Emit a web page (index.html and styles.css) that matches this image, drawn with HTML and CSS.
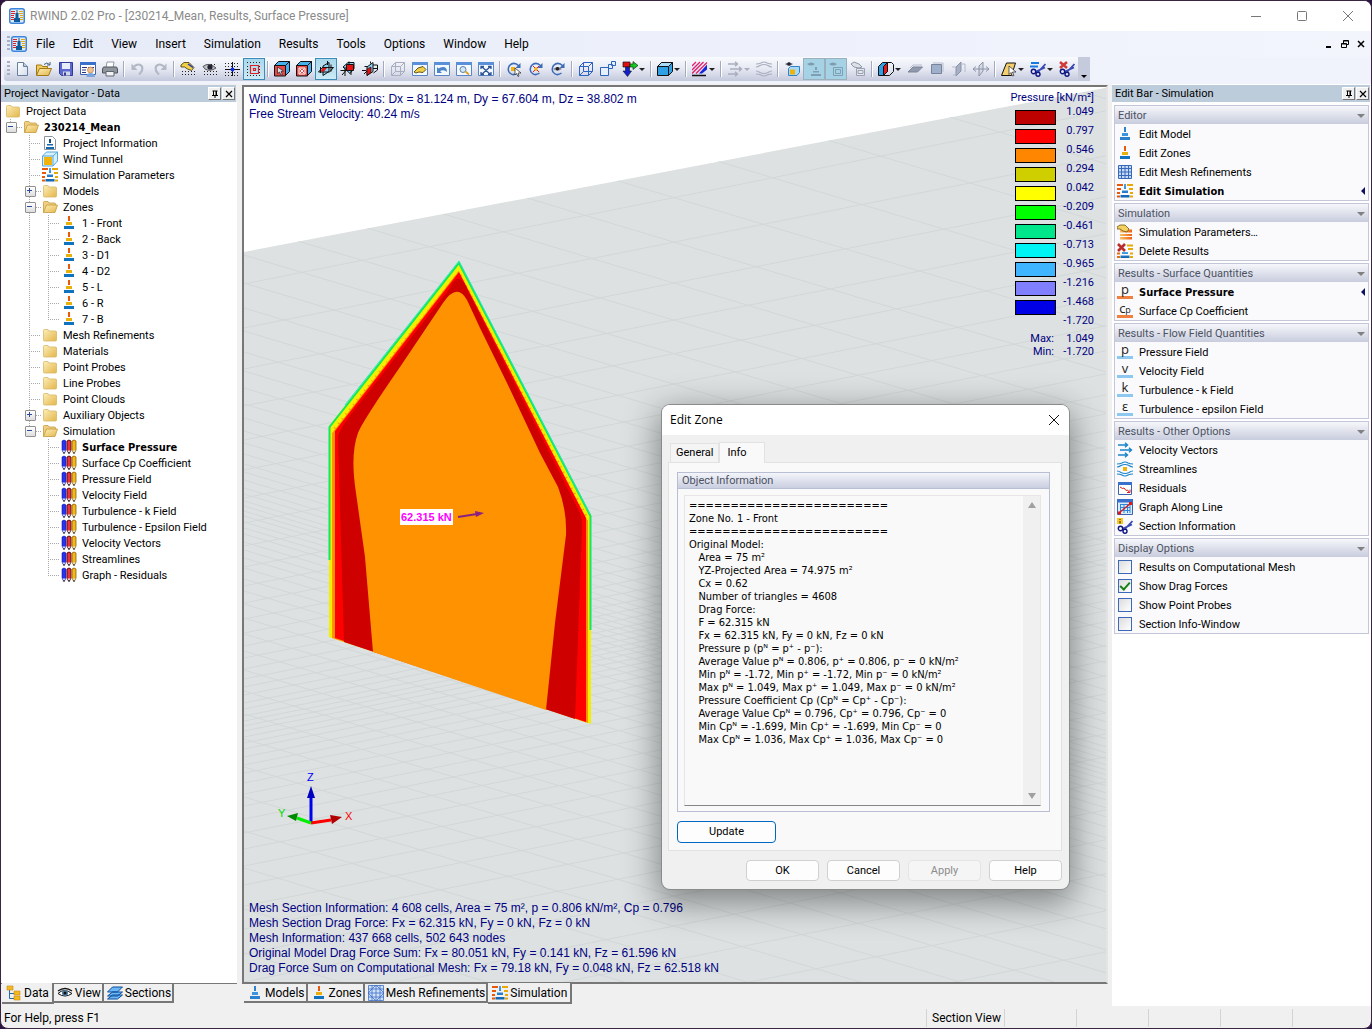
FILE: index.html
```html
<!DOCTYPE html>
<html lang="en">
<head>
<meta charset="utf-8">
<title>RWIND 2.02 Pro</title>
<link rel="stylesheet" href="styles.css">
</head>
<body>
<svg class="sprite" aria-hidden="true">
  <defs>
    <linearGradient id="gFolder" x1="0" y1="0" x2="1" y2="1"><stop offset="0" stop-color="#fdeeb8"/><stop offset="1" stop-color="#e3b64a"/></linearGradient>
    <linearGradient id="gBlue" x1="0" y1="0" x2="0" y2="1"><stop offset="0" stop-color="#4fa8e8"/><stop offset="1" stop-color="#0c62b0"/></linearGradient>
    <linearGradient id="gPage" x1="0" y1="0" x2="1" y2="1"><stop offset="0" stop-color="#fff"/><stop offset="1" stop-color="#d5deec"/></linearGradient>
    <linearGradient id="gOr" x1="0" y1="0" x2="1" y2="0"><stop offset="0" stop-color="#f9c060"/><stop offset="1" stop-color="#ef5f14"/></linearGradient>
  </defs>
  <symbol id="app" viewBox="0 0 16 16"><rect x=".75" y=".75" width="14.500" height="14.500" rx="2" fill="#dcebfb" stroke="#3c84dc" stroke-width="1.500"/><path d="M2 3.500h4M2 5.500h4M2 7.500h3M2 9.500h3M2 11.500h3" stroke="#e02020"/><path d="M10 3.500h4M10 5.500h4M11 7.500h3M11 9.500h3M11 11.500h3" stroke="#e8a800"/><path d="M7.500 2h1v3h1v5h1.500v4h-6v-4h1.500v-5h1z" fill="#0c5c9c"/></symbol>
  <symbol id="folder" viewBox="0 0 16 16"><path d="M1.500 3.500q0-1 1-1h3.500l1 1.500h6.500q1 0 1 1v8q0 1-1 1h-11q-1 0-1-1z" fill="url(#gFolder)" stroke="#d8b766" stroke-width=".8"/></symbol>
  <symbol id="folderopen" viewBox="0 0 16 16"><path d="M1.500 13.500v-10q0-1 1-1h3.500l1 1.500h5.500q1 0 1 1v2" fill="#f0d080" stroke="#c49a40" stroke-width=".8"/><path d="M1.500 13.500l3-7.500h11l-2.500 7.500z" fill="url(#gFolder)" stroke="#c49a40" stroke-width=".8"/></symbol>
  <symbol id="zone" viewBox="0 0 16 16"><path d="M7 1h2v5h-2z" fill="#e8590c"/><path d="M5 7h6v3h-6z" fill="#e8b008"/><path d="M3 11h10v3h-10z" fill="#1173bf"/></symbol>
  <symbol id="model" viewBox="0 0 16 16"><path d="M7 1h2v5h-2z" fill="#2c82cf"/><path d="M5 7h6v3h-6z" fill="#3d93de"/><path d="M3 11h10v3h-10z" fill="#2c82cf"/></symbol>
  <symbol id="sim" viewBox="0 0 16 16"><path d="M0 2h6M0 6h4M0 10h3M0 13.500h3" stroke="#e8590c" stroke-width="2"/><path d="M10 2h6M12 6h4M13 10h3M13 13.500h3" stroke="#e8a808" stroke-width="2"/><path d="M7 1h2v5h-2zM5 7.500h6v2.500h-6zM3.500 12h9v2.500h-9z" fill="url(#gBlue)"/></symbol>
  <symbol id="info" viewBox="0 0 16 16"><path d="M2.500 1.500h8l3 3v10h-11z" fill="#fff" stroke="#8a949c"/><path d="M7 4h2v4h-2z" fill="#174f78"/><path d="M5 9h6v1.500h-6zM4 12h8v2h-8z" fill="#1468b0"/></symbol>
  <symbol id="tunnel" viewBox="0 0 16 16"><path d="M.5 5l4-4h11v9l-4.500 5h-10.500z" fill="#d9effb" stroke="#55a8d8"/><path d="M1 5h10v10M11 5l4.500-4" fill="none" stroke="#55a8d8"/><path d="M2 6h8v8h-8z" fill="#f2b20c"/></symbol>
  <symbol id="pens" viewBox="0 0 16 16"><path d="M1 2q2-2 4 0v9l-1.500 3h-1l-1.500-3z" fill="#2a32f0" stroke="#1a1c90" stroke-width=".6"/><path d="M6 2q2-2 4 0v9l-1.500 3h-1l-1.500-3z" fill="#f03040" stroke="#300" stroke-width=".8"/><path d="M11 2q2-2 4 0v9l-1.500 3h-1l-1.500-3z" fill="#f0b820" stroke="#8c6000" stroke-width=".8"/><path d="M1.500 11.500l1 2h1l1-2zM6.500 11.500l1 2h1l1-2zM11.500 11.500l1 2h1l1-2z" fill="#ddd"/><path d="M3 13v2M8 13v2M13 13v2" stroke="#222"/></symbol>
  <symbol id="grid" viewBox="0 0 16 16"><path d="M1.500 1.500h13v13h-13z" fill="#c4dcfa" stroke="#3a68b8"/><path d="M4.500 1v14M8 1v14M11.500 1v14M1 4.500h14M1 8h14M1 11.500h14" stroke="#3a68b8"/></symbol>
  <symbol id="mesh" viewBox="0 0 16 16"><path d="M.5.5h15v15h-15zM8 0v16M0 8h16M0 4h16M0 12h16M0 8l8-8 8 8-8 8zM4 0v16M12 0v16" fill="#cfe0fa" stroke="#3f70c4" stroke-width=".8"/></symbol>
  <symbol id="simpar" viewBox="0 0 16 16"><path d="M3 5.500h12v3h-12zM3 10h12v2h-12zM3 13h12v2.500h-12z" fill="url(#gOr)"/><path d="M0 3l3-2h5l4 4-2 3-4-1-3-2H0z" fill="#f4d060" stroke="#705010" stroke-width=".8"/></symbol>
  <symbol id="delres" viewBox="0 0 16 16"><path d="M10 2.500h6M11 6h5M13 10.500h3M13 14h3" stroke="#e8a808" stroke-width="2"/><path d="M0 10.500h3M0 14h3" stroke="#e8700c" stroke-width="2"/><path d="M5 9h6v2h-6zM3.500 12.500h9v2.500h-9z" fill="url(#gBlue)"/><path d="M1 1l7 7M8 1l-7 7" stroke="#b82c2c" stroke-width="2.600"/></symbol>
  <symbol id="vectors" viewBox="0 0 16 16"><path d="M1 3h9M3 8h11M1 13h9M8 .8l2.500 2.200L8 5.200M12 5.800l2.500 2.200L12 10.200M8 10.800l2.500 2.200L8 15.200" fill="none" stroke="currentColor" stroke-width="1.400"/></symbol>
  <symbol id="streams" viewBox="0 0 16 16"><path d="M0 3q3 0 5-1 3-2 6 0 2 1 5 1M0 6q2 0 4-1.500 4-2 8 0 2 1.500 4 1.500M0 10q2 0 4 1.500 4 2 8 0 2-1.500 4-1.500M0 13q3 0 5 1 3 2 6 0 2-1 5-1" fill="none" stroke="currentColor" stroke-width="1.200"/></symbol>
  <symbol id="resid" viewBox="0 0 16 16"><path d="M1.500 2.500h13v12h-13z" fill="#fff" stroke="#3a62b0"/><path d="M1 2h14v3h-14z" fill="#3a70cc"/><path d="M3 7l2.500 1.500 1.500-.5 2 2.500 1.500-.5 2 2.500M13 9.500v3h-3" fill="none" stroke="#e01818"/></symbol>
  <symbol id="graph" viewBox="0 0 16 16"><path d="M.5 1.500h15v14h-15z" fill="#d8ecfc" stroke="#3a62b0"/><path d="M0 0h16v3.500h-16z" fill="#3a70cc"/><path d="M3.500 5v9M7 5v9M10.500 5v9M13 5v9M3 5.500h10M3 8.500h10M3 11.500h10" stroke="#2f86d8"/><path d="M2 14l12-10" stroke="#e01818" stroke-width="1.300"/><path d="M1 12.500h3v3h-3zM12 3h3v3h-3z" fill="#e01818"/></symbol>
  <symbol id="cut" viewBox="0 0 16 16"><path d="M15.500 3l-7.500 8M15 6.500l-9 4" stroke="#3a4ab4" stroke-width="1.800"/><circle cx="3.500" cy="10.500" r="2.200" fill="none" stroke="#0c1480" stroke-width="1.400"/><circle cx="8" cy="13.300" r="2" fill="none" stroke="#0c1480" stroke-width="1.400"/></symbol>
  <symbol id="cutinfo" viewBox="0 0 16 16"><use href="#cut"/><path d="M0 0h6v6h-6z" fill="#f6c820"/><path d="M3 1v1M3 3v2.500" stroke="#222"/></symbol>
  <symbol id="cutdel" viewBox="0 0 16 16"><use href="#cut"/><path d="M1 1l7 6M8 1l-7 6" stroke="#d03a3a" stroke-width="2.600"/></symbol>
  <symbol id="cutadd" viewBox="0 0 16 16"><use href="#cut"/><path d="M1 1h8v2h-8zM0 4.500h8v2h-8z" fill="#1878e0"/></symbol>
  <symbol id="new" viewBox="0 0 16 16"><path d="M3.500 1.500h6l4 4v9h-10z" fill="url(#gPage)" stroke="#68809c"/><path d="M9.500 1.500v4h4" fill="#b8cce4" stroke="#68809c"/></symbol>
  <symbol id="open" viewBox="0 0 16 16"><path d="M.5 14v-10h5l1 1.500h5v2" fill="#f0cc60" stroke="#a07818"/><path d="M.5 14.500l3-7h12l-3 7z" fill="url(#gFolder)" stroke="#a07818"/><path d="M8 3.500q3-3 5.500 0M14 1v3h-3" fill="none" stroke="#3c6080"/></symbol>
  <symbol id="save" viewBox="0 0 16 16"><path d="M1.500 1.500h13v13h-11l-2-2z" fill="#5c68d0" stroke="#303a98"/><path d="M4 2h8v6h-8z" fill="#e8edfa"/><path d="M5 10.500h7v4h-7z" fill="#d2d6e6"/><path d="M6 11.500h2v3h-2z" fill="#303a98"/></symbol>
  <symbol id="data" viewBox="0 0 16 16"><path d="M.5 1.500h15v12h-15z" fill="#fff" stroke="#3a62b0"/><path d="M0 1h16v3h-16z" fill="#3a70cc"/><path d="M2 6.500h5M2 9h4M2 11.500h4M8 6.500h6" stroke="#303080"/><circle cx="10.500" cy="9" r="3" fill="#f2c08c" stroke="#b07038" stroke-width=".6"/><path d="M6.500 16q0-4 4-4t4.500 4z" fill="#7aa4dc"/></symbol>
  <symbol id="print" viewBox="0 0 16 16"><path d="M5 1h7l-1 6H4z" fill="#fff" stroke="#78808c" stroke-width=".8"/><path d="M1.500 6h13l1 2v4h-15v-4z" fill="#90969e" stroke="#50565e"/><path d="M4 10.500h8v4.500h-8z" fill="#f0f2f6" stroke="#60666e"/></symbol>
  <symbol id="undo" viewBox="0 0 16 16"><path d="M4 5.500q5-4 8 0 1.500 4-3 8" fill="none" stroke="#b2b8c6" stroke-width="2.200"/><path d="M1.500 2.500v6.500h6z" fill="#b2b8c6"/></symbol>
  <symbol id="hand" viewBox="0 0 16 16"><path d="M2 10.500h13M2 13.500h13M9 7.500h6" stroke="#222" stroke-dasharray="1 2"/><path d="M1 4l3-2.500h5l5 5-2.500 3-4-1.500-3-2H1z" fill="#f0d048" stroke="#403000" stroke-width=".8"/><path d="M8 3l5 3.500" stroke="#2436b8" stroke-width="1.500"/></symbol>
  <symbol id="eyedots" viewBox="0 0 16 16"><path d="M2 10.500h13M2 13.500h13M9 3.500h6" stroke="#222" stroke-dasharray="1 2"/><path d="M1 5.500q6-5 13 1.500-6 4-11 1z" fill="#c0c4cc" stroke="#333" stroke-width=".8"/><circle cx="8" cy="6" r="2.600" fill="#223"/></symbol>
  <symbol id="cross" viewBox="0 0 16 16"><path d="M1 2.500h15M1 5.500h15M1 11.500h15M1 14.500h15" stroke="#222" stroke-dasharray="1 2"/><path d="M8.500 1v14M1 8.500h15" stroke="#111"/><circle cx="8.500" cy="8.500" r="2" fill="#1030e0"/></symbol>
  <symbol id="snap" viewBox="0 0 16 16"><path d="M1 1.500h15M1 14.500h15M1 5.500h3M13 5.500h3M1 8.500h3M13 8.500h3M1 11.500h3M13 11.500h3" stroke="#222" stroke-dasharray="1 2"/><path d="M4.500 4.500h8v8h-8zM7.500 7.500h2v2h-2z" fill="none" stroke="#e02020" stroke-width="1.200"/></symbol>
  <symbol id="redbox" viewBox="0 0 16 16"><path d="M.5 4.500l4-4h11v10l-4 4h-11z" fill="#48b0ec" stroke="#111"/><path d="M.5 4.500h11v10.500h-11zM11.500 4.500l4-4" fill="#e84848" stroke="#111"/></symbol>
  <symbol id="boxsel" viewBox="0 0 16 16"><use href="#redbox"/><path d="M3.500 6l6 4-2.500.5 1.500 3-1.500.5-1.500-3-2 1.500z" fill="#ddd" stroke="#222" stroke-width=".7"/></symbol>
  <symbol id="boxdel" viewBox="0 0 16 16"><use href="#redbox"/><path d="M3 7h6v6h-6zM4 8l4 4M8 8l-4 4" fill="none" stroke="#fff"/></symbol>
  <symbol id="secA" viewBox="0 0 16 16"><path d="M5 5l6-3.500v9l-6 4z" fill="#8cd4f4" stroke="#111"/><path d="M.5 11l4-4.500h11l-4 4.500z" fill="none" stroke="#111"/><path d="M2 10.500l3-3.500 4 0-3 3.500z" fill="#e01818"/><path d="M9.500 0v4M13 3.500v7M2.500 6v6" stroke="#111"/></symbol>
  <symbol id="secB" viewBox="0 0 16 16"><path d="M3 6l5-4.500h6v6l-4 5z" fill="#8cd4f4" stroke="#111"/><path d="M6.500 3.500h7v6h-7z" fill="#e81010" stroke="#111"/><path d="M.5 9.500h12M5 6v9M2 14l4-4.500M9 .5v3M11 9v5" stroke="#111" fill="none"/></symbol>
  <symbol id="secC" viewBox="0 0 16 16"><path d="M5 6l6-4.500v9l-6 4z" fill="#8cd4f4" stroke="#111"/><path d="M5 8l4-2v5.500l-4 3z" fill="#e81010" stroke="#111" stroke-width=".7"/><path d="M0 9.500h4M2.500 5.500h3M11 4h4.500v5l-4 3M11 7.500h4.500M8.500.5v2M2 13l3-3" stroke="#111" fill="none"/></symbol>
  <symbol id="wire" viewBox="0 0 16 16"><path d="M1.500 5.500h9v9h-9zM5.500 1.500h9v9h-9zM1.500 5.500l4-4M10.500 5.500l4-4M1.500 14.500l4-4M10.500 14.500l4-4" fill="none" stroke="currentColor"/></symbol>
  <symbol id="win" viewBox="0 0 16 16"><path d="M.5 1.500h15v13h-15z" fill="#f4f9ff" stroke="#5a86c8"/><path d="M0 1h16v3h-16z" fill="#5a90d8"/></symbol>
  <symbol id="winhand" viewBox="0 0 16 16"><use href="#win"/><path d="M2 11l4-4 5-1.500 3 3-3 3-4-.5-3 1z" fill="#f0d048" stroke="#403000" stroke-width=".8"/></symbol>
  <symbol id="winback" viewBox="0 0 16 16"><use href="#win"/><path d="M3 6v6h5l-2-2q4-2 7 1 0-5-4-5-3 0-4.500 1.500z" fill="#4c84c8"/></symbol>
  <symbol id="winzoom" viewBox="0 0 16 16"><use href="#win"/><circle cx="7" cy="8.500" r="3" fill="#cfe8fa" stroke="#68809c"/><path d="M9.500 10.500l3.500 3" stroke="#e0a020" stroke-width="1.800"/></symbol>
  <symbol id="winfit" viewBox="0 0 16 16"><use href="#win"/><path d="M3.500 5.500l9 8M12.500 5.500l-9 8M3 8V5.500h3M10 5.500h3V8M3 11v2.500h3M13 11v2.500h-3" fill="none" stroke="#2c5494" stroke-width="1.300"/></symbol>
  <symbol id="rot" viewBox="0 0 16 16"><path d="M13 5q-5-5-9.500-.5-3 5 1 8 3 2.500 7-.500" fill="none" stroke="#3c6cb8" stroke-width="1.500"/><path d="M14.500 2v5h-5z" fill="#3c6cb8"/></symbol>
  <symbol id="rotA" viewBox="0 0 16 16"><use href="#rot"/><path d="M5 6h4v4h-4z" fill="#f0b010"/><path d="M9 7l6 5h-3l1 3-1 .5-1.500-3-1.500 1.500z" fill="#fff" stroke="#222" stroke-width=".7"/></symbol>
  <symbol id="rotB" viewBox="0 0 16 16"><use href="#rot"/><path d="M5 5l6 6M11 5l-6 6" stroke="#e02020"/><circle cx="8" cy="8" r="1.700" fill="#f0b010"/></symbol>
  <symbol id="rotC" viewBox="0 0 16 16"><use href="#rot"/><path d="M3 8q5-4 9 0-5 3-9 0z" fill="#889" /><circle cx="7.500" cy="7.800" r="1.800" fill="#222"/></symbol>
  <symbol id="boxes" viewBox="0 0 16 16"><path d="M.5 6.500h8v8h-8zM8.500 3.500h4v4h-4zM11.500 .5h4v4h-4z" fill="#e6effc" stroke="#2c62c0"/></symbol>
  <symbol id="axes" viewBox="0 0 16 16"><path d="M1 1h7v5h-7z" fill="#e01010" stroke="#111" stroke-width=".7"/><path d="M3.500 6h4v4h2l-4 5.500-4.500-5.500h2.500z" fill="#1020d0" stroke="#111" stroke-width=".6"/><path d="M8 3h3V.500l5 4-5 4V6H8z" fill="#10c820" stroke="#111" stroke-width=".6"/></symbol>
  <symbol id="solid" viewBox="0 0 16 16"><path d="M.5 5.500l4-4h11v9l-4 4h-11z" fill="#30a0e4" stroke="#111"/><path d="M.5 5.500l4-4h11l-4 4z" fill="#a8dcf8" stroke="#111"/><path d="M11.500 5.500v9" stroke="#111"/></symbol>
  <symbol id="hatch" viewBox="0 0 16 16"><path d="M0 5l4-4M0 9l8-8M0 12.500L11.500 1M4 12.500L15 1.500" stroke="#e02070" stroke-width="1.300"/><path d="M7 12.500l8-9v5l-5 4z" fill="#1428d8"/><path d="M0 14.500h14" stroke="#111" stroke-width="1.500"/></symbol>
  <symbol id="eyebox" viewBox="0 0 16 16"><path d="M1 3q4-3 8 0-4 3-8 0z" fill="#667"/><circle cx="5" cy="3" r="1.700" fill="#223"/><path d="M4.500 7.500l2-2h9v6l-2.500 3h-8.500z" fill="#a8daf6" stroke="#2c84c8"/><path d="M6 8.500h5v5h-5z" fill="#f2b20c"/></symbol>
  <symbol id="eyemodel" viewBox="0 0 16 16"><path d="M1 3q4-3 8 0-4 3-8 0z" fill="#7f9cac"/><path d="M9 6h2v3h-2zM7 10h6v1.500h-6zM5 13h10v2h-10z" fill="#7fa0b4"/></symbol>
  <symbol id="eyemesh" viewBox="0 0 16 16"><path d="M1 3q4-3 8 0-4 3-8 0z" fill="#7f9cac"/><path d="M5.500 6.500h9v8h-9zM7.500 8.500h5v4h-5z" fill="none" stroke="#7fa0b4"/></symbol>
  <symbol id="handbox" viewBox="0 0 16 16"><path d="M1 3l3-2 5 2 3 3-3 1-5-1z" fill="#dde0e6" stroke="#8f98a8"/><path d="M6.500 7.500h8v7h-8zM8 9.500h5v3H8z" fill="#e4e7ee" stroke="#9aa2b2"/></symbol>
  <symbol id="clip" viewBox="0 0 16 16"><path d="M.5 5.500l4-4h5v9l-4 4h-5z" fill="#30a0e4" stroke="#111"/><path d="M5.500 5.500l4-4v9l-4 4z" fill="#e81818" stroke="#111"/><path d="M9.500 1.500h4l2 2v7l-4 4h-6" fill="none" stroke="#111"/></symbol>
  <symbol id="plane1" viewBox="0 0 16 16"><path d="M1 11l5-5h9.500l-5 5z" fill="#9199ac" stroke="#7a8398"/><path d="M3 7l3-3h9" fill="none" stroke="#b8bece"/></symbol>
  <symbol id="plane2" viewBox="0 0 16 16"><path d="M2.500 3.500h10v9h-10z" fill="#9fb0cc" stroke="#7a8398"/><path d="M4 2h10v9" fill="none" stroke="#b8bece"/></symbol>
  <symbol id="plane3" viewBox="0 0 16 16"><path d="M5 6l5-5v9l-5 5z" fill="#a6b0c4" stroke="#8a92a6"/><path d="M1 6h4M2 14h3M10 3h4v8" fill="none" stroke="#b4bac8"/></symbol>
  <symbol id="plane4" viewBox="0 0 16 16"><path d="M6 5l4-4v9l-4 5z" fill="#d4d9e6" stroke="#8a92a6"/><path d="M0 8h16M3 5.500l-3 2.500 3 2.500M13 5.500l3 2.500-3 2.500" fill="none" stroke="#8a92a6"/></symbol>
  <symbol id="pickplane" viewBox="0 0 16 16"><path d="M.5 14.500l5-12.500h9l-4 12.500z" fill="#f4cf70" stroke="#111"/><path d="M8 5l7 6h-3.500l1.500 3.500-1.500.5-1.500-3.500-2 2z" fill="#fff" stroke="#222" stroke-width=".7"/></symbol>
  <symbol id="tree" viewBox="0 0 16 16"><path d="M3.500 5v8.500h5M3.500 8.500h5" fill="none" stroke="#2068a8"/><path d="M1 1h6v4h-6zM8 6h6v4h-6zM8 11h6v4h-6z" fill="#f4b820" stroke="#c88c10" stroke-width=".6"/></symbol>
  <symbol id="eye" viewBox="0 0 16 16"><path d="M1 8.500q6-6 14 0-7 5-14 0z" fill="#fff" stroke="#111"/><path d="M1 6q7-5 14 0" fill="none" stroke="#111" stroke-width="1.300"/><circle cx="8" cy="8" r="3" fill="#4c7ca0"/><circle cx="8" cy="8" r="1.500" fill="#111"/></symbol>
  <symbol id="layers" viewBox="0 0 16 16"><path d="M.5 14l5-4h10l-5 4zM.5 11l5-4h10l-5 4zM.5 7l5-5h10l-5 5z" fill="#6cb8f4" stroke="#0c4c9c"/></symbol>
  <symbol id="pin" viewBox="0 0 8 8"><path d="M1.500 1h5M2.500 1v4M5.500 1v4M1 5.500h6M4 5.500V8" fill="none" stroke="#000"/><path d="M5 1v4" stroke="#000"/></symbol>
  <symbol id="x" viewBox="0 0 8 8"><path d="M1 1l6 6M7 1l-6 6" stroke="currentColor" stroke-width="1.200"/></symbol>
</svg>

<div class="window">
  <header class="titlebar">
    <svg class="ic"><use href="#app"/></svg>
    <h1>RWIND 2.02 Pro - [230214_Mean, Results, Surface Pressure]</h1>
    <div class="winbtns">
      <button aria-label="Minimize"><svg viewBox="0 0 10 10"><path d="M0 5.500h10"/></svg></button>
      <button aria-label="Maximize"><svg viewBox="0 0 10 10"><rect x=".5" y=".5" width="9" height="9" rx="1"/></svg></button>
      <button aria-label="Close"><svg viewBox="0 0 10 10"><path d="M0 0l10 10M10 0L0 10"/></svg></button>
    </div>
  </header>

  <nav class="menubar">
    <span class="grip"></span>
    <svg class="ic"><use href="#app"/></svg>
    <button>File</button><button>Edit</button><button>View</button><button>Insert</button><button>Simulation</button><button>Results</button><button>Tools</button><button>Options</button><button>Window</button><button>Help</button>
    <div class="mdi">
      <button aria-label="Minimize document"><svg viewBox="0 0 8 8"><path d="M1 7h5" stroke-width="2"/></svg></button>
      <button aria-label="Restore document"><svg viewBox="0 0 8 8"><path d="M2.500 3V.500h5v4H6M.500 3.500h5v4h-5zM.500 4h5M2.500 1h5"/></svg></button>
      <button aria-label="Close document"><svg viewBox="0 0 8 8"><path d="M1 1l6 6M7 1L1 7" stroke-width="1.500"/></svg></button>
    </div>
  </nav>

  <div class="toolrow">
    <div class="toolbar">
      <span class="grip"></span>
      <button aria-label="New"><svg class="ic"><use href="#new"/></svg></button>
      <button aria-label="Open"><svg class="ic"><use href="#open"/></svg></button>
      <button aria-label="Save"><svg class="ic"><use href="#save"/></svg></button>
      <button aria-label="Data"><svg class="ic"><use href="#data"/></svg></button>
      <button aria-label="Print"><svg class="ic"><use href="#print"/></svg></button>
      <i></i>
      <button aria-label="Undo"><svg class="ic"><use href="#undo"/></svg></button>
      <button aria-label="Redo" class="flip"><svg class="ic"><use href="#undo"/></svg></button>
      <i></i>
      <button aria-label="Edit grid"><svg class="ic"><use href="#hand"/></svg></button>
      <button aria-label="Show grid"><svg class="ic"><use href="#eyedots"/></svg></button>
      <button aria-label="Origin"><svg class="ic"><use href="#cross"/></svg></button>
      <button aria-label="Snap" class="on"><svg class="ic"><use href="#snap"/></svg></button>
      <i></i>
      <button aria-label="Run"><svg class="ic"><use href="#boxsel"/></svg></button>
      <button aria-label="Delete"><svg class="ic"><use href="#boxdel"/></svg></button>
      <button aria-label="Section X" class="on"><svg class="ic"><use href="#secA"/></svg></button>
      <button aria-label="Section Y"><svg class="ic"><use href="#secB"/></svg></button>
      <button aria-label="Section Z"><svg class="ic"><use href="#secC"/></svg></button>
      <i></i>
      <button aria-label="Wireframe" class="dim"><svg class="ic"><use href="#wire"/></svg></button>
      <button aria-label="Pan"><svg class="ic"><use href="#winhand"/></svg></button>
      <button aria-label="Previous view"><svg class="ic"><use href="#winback"/></svg></button>
      <button aria-label="Zoom window"><svg class="ic"><use href="#winzoom"/></svg></button>
      <button aria-label="Zoom all"><svg class="ic"><use href="#winfit"/></svg></button>
      <i></i>
      <button aria-label="Rotate"><svg class="ic"><use href="#rotA"/></svg></button>
      <button aria-label="Rotate about point"><svg class="ic"><use href="#rotB"/></svg></button>
      <button aria-label="Rotate camera"><svg class="ic"><use href="#rotC"/></svg></button>
      <i></i>
      <button aria-label="Isometric"><svg class="ic"><use href="#wire"/></svg></button>
      <button aria-label="Perspective"><svg class="ic"><use href="#boxes"/></svg></button>
      <button aria-label="View direction" class="drop"><svg class="ic"><use href="#axes"/></svg></button>
      <i></i>
      <button aria-label="Display mode" class="drop"><svg class="ic"><use href="#solid"/></svg></button>
      <i></i>
      <button aria-label="Hatching" class="drop"><svg class="ic"><use href="#hatch"/></svg></button>
      <i></i>
      <button aria-label="Vectors" class="drop dim"><svg class="ic"><use href="#vectors"/></svg></button>
      <button aria-label="Streamlines" class="dim"><svg class="ic"><use href="#streams"/></svg></button>
      <i></i>
      <button aria-label="Show tunnel"><svg class="ic"><use href="#eyebox"/></svg></button>
      <button aria-label="Show model" class="on soft"><svg class="ic"><use href="#eyemodel"/></svg></button>
      <button aria-label="Show mesh" class="on soft"><svg class="ic"><use href="#eyemesh"/></svg></button>
      <button aria-label="Edit mesh"><svg class="ic"><use href="#handbox"/></svg></button>
      <i></i>
      <button aria-label="Clipping" class="drop"><svg class="ic"><use href="#clip"/></svg></button>
      <button aria-label="Plane XY"><svg class="ic"><use href="#plane1"/></svg></button>
      <button aria-label="Plane XZ"><svg class="ic"><use href="#plane2"/></svg></button>
      <button aria-label="Plane YZ"><svg class="ic"><use href="#plane3"/></svg></button>
      <button aria-label="Shift plane"><svg class="ic"><use href="#plane4"/></svg></button>
      <i></i>
      <button aria-label="Pick plane" class="drop"><svg class="ic"><use href="#pickplane"/></svg></button>
      <button aria-label="New section" class="drop"><svg class="ic"><use href="#cutadd"/></svg></button>
      <button aria-label="Delete section"><svg class="ic"><use href="#cutdel"/></svg></button>
      <button aria-label="Toolbar options" class="more"></button>
    </div>
  </div>

  <main class="main">
    <section class="nav">
      <div class="panehead"><h2>Project Navigator - Data</h2><button aria-label="Pin"><svg><use href="#pin"/></svg></button><button aria-label="Close"><svg><use href="#x"/></svg></button></div>
      <div class="treebox">
        <div class="row"><svg class="ic"><use href="#folder"/></svg><span>Project Data</span></div>
        <ul class="tree">
          <li><div class="row"><b class="ex">−</b><svg class="ic"><use href="#folderopen"/></svg><strong>230214_Mean</strong></div>
            <ul>
              <li><div class="row"><b></b><svg class="ic"><use href="#info"/></svg><span>Project Information</span></div></li>
              <li><div class="row"><b></b><svg class="ic"><use href="#tunnel"/></svg><span>Wind Tunnel</span></div></li>
              <li><div class="row"><b></b><svg class="ic"><use href="#sim"/></svg><span>Simulation Parameters</span></div></li>
              <li><div class="row"><b class="ex">+</b><svg class="ic"><use href="#folder"/></svg><span>Models</span></div></li>
              <li><div class="row"><b class="ex">−</b><svg class="ic"><use href="#folderopen"/></svg><span>Zones</span></div>
                <ul>
                  <li><div class="row"><b></b><svg class="ic"><use href="#zone"/></svg><span>1 - Front</span></div></li>
                  <li><div class="row"><b></b><svg class="ic"><use href="#zone"/></svg><span>2 - Back</span></div></li>
                  <li><div class="row"><b></b><svg class="ic"><use href="#zone"/></svg><span>3 - D1</span></div></li>
                  <li><div class="row"><b></b><svg class="ic"><use href="#zone"/></svg><span>4 - D2</span></div></li>
                  <li><div class="row"><b></b><svg class="ic"><use href="#zone"/></svg><span>5 - L</span></div></li>
                  <li><div class="row"><b></b><svg class="ic"><use href="#zone"/></svg><span>6 - R</span></div></li>
                  <li><div class="row"><b></b><svg class="ic"><use href="#zone"/></svg><span>7 - B</span></div></li>
                </ul></li>
              <li><div class="row"><b></b><svg class="ic"><use href="#folder"/></svg><span>Mesh Refinements</span></div></li>
              <li><div class="row"><b></b><svg class="ic"><use href="#folder"/></svg><span>Materials</span></div></li>
              <li><div class="row"><b></b><svg class="ic"><use href="#folder"/></svg><span>Point Probes</span></div></li>
              <li><div class="row"><b></b><svg class="ic"><use href="#folder"/></svg><span>Line Probes</span></div></li>
              <li><div class="row"><b></b><svg class="ic"><use href="#folder"/></svg><span>Point Clouds</span></div></li>
              <li><div class="row"><b class="ex">+</b><svg class="ic"><use href="#folder"/></svg><span>Auxiliary Objects</span></div></li>
              <li><div class="row"><b class="ex">−</b><svg class="ic"><use href="#folderopen"/></svg><span>Simulation</span></div>
                <ul>
                  <li><div class="row"><b></b><svg class="ic"><use href="#pens"/></svg><strong>Surface Pressure</strong></div></li>
                  <li><div class="row"><b></b><svg class="ic"><use href="#pens"/></svg><span>Surface Cp Coefficient</span></div></li>
                  <li><div class="row"><b></b><svg class="ic"><use href="#pens"/></svg><span>Pressure Field</span></div></li>
                  <li><div class="row"><b></b><svg class="ic"><use href="#pens"/></svg><span>Velocity Field</span></div></li>
                  <li><div class="row"><b></b><svg class="ic"><use href="#pens"/></svg><span>Turbulence - k Field</span></div></li>
                  <li><div class="row"><b></b><svg class="ic"><use href="#pens"/></svg><span>Turbulence - Epsilon Field</span></div></li>
                  <li><div class="row"><b></b><svg class="ic"><use href="#pens"/></svg><span>Velocity Vectors</span></div></li>
                  <li><div class="row"><b></b><svg class="ic"><use href="#pens"/></svg><span>Streamlines</span></div></li>
                  <li><div class="row"><b></b><svg class="ic"><use href="#pens"/></svg><span>Graph - Residuals</span></div></li>
                </ul></li>
            </ul></li>
        </ul>
      </div>
      <div class="tabs">
        <button class="cur"><svg class="ic"><use href="#tree"/></svg>Data</button>
        <button><svg class="ic"><use href="#eye"/></svg>View</button>
        <button><svg class="ic"><use href="#layers"/></svg>Sections</button>
      </div>
    </section>

    <section class="center">
      <div class="view">
        <svg class="scene" id="scene">
          <g transform="translate(-244,-87)">
            <clipPath id="floorclip"><path d="M244 252L1110 87h3000v3000H244z"/></clipPath>
            <path d="M244 252L1110 87h3000v3000H244z" fill="#dde1e1"/>
            <g id="mesh-lines" clip-path="url(#floorclip)" stroke="#d2d7d7" fill="none"></g>
            <path d="M329 426L459 261L591 515V724L329 637z" fill="#f0f000"/>
            <path d="M332 638V430L459 270L588 517V723z" fill="#ff9400"/>
            <path d="M335 638V431L459 272L586 518V722z" fill="#f00"/>
            <path d="M344 642L338 437Q339 430 352 413L450 288Q459 268 468 291L580 513Q583 522 582 530L575 719z" fill="#ce0000"/>
            <path d="M373 652L365 557L356 493Q350 455 358 433Q362 422 400 367L443 303Q457 282 467 300L480 328L507 383L540 453L558 487Q567 510 566 535L555 623L546 710z" fill="#ff9200"/>
            <path d="M331 432L459 268L589 520" fill="none" stroke="#f4ee00" stroke-width="3" stroke-dasharray="5 1"/>
            <path d="M329.500 560V427L459 263L590.500 516V630" fill="none" stroke="#10e860" stroke-width="2"/>
            <path d="M345 405L459 261L590 514" fill="none" stroke="#20e8c8" stroke-width="1"/>
            <path d="M458 517L477 514" stroke="#8a2080" stroke-width="2"/><path d="M475 511L484 513L476 517z" fill="#8a2080"/>
            <path d="M311 823V797" stroke="#0000f0" stroke-width="3"/><path d="M311 786L315 798H307z" fill="#0000c0"/>
            <path d="M311 823L331 820" stroke="#f00" stroke-width="3"/><path d="M342 817L332 824L330 815z" fill="#b00000"/>
            <path d="M311 823L297 818" stroke="#00f000" stroke-width="3"/><path d="M287 816L298 813L296 821z" fill="#008800"/>
          </g>
        </svg>
        <span class="force">62.315 kN</span>
        <span class="ax z">Z</span><span class="ax y">Y</span><span class="ax x">X</span>
        <p class="note head">Wind Tunnel Dimensions: Dx = 81.124 m, Dy = 67.604 m, Dz = 38.802 m<br>Free Stream Velocity: 40.24 m/s</p>
        <p class="note foot">Mesh Section Information: 4 608 cells, Area = 75 m², p = 0.806 kN/m², Cp = 0.796<br>Mesh Section Drag Force: Fx = 62.315 kN, Fy = 0 kN, Fz = 0 kN<br>Mesh Information: 437 668 cells, 502 643 nodes<br>Original Model Drag Force Sum: Fx = 80.051 kN, Fy = 0.141 kN, Fz = 61.596 kN<br>Drag Force Sum on Computational Mesh: Fx = 79.18 kN, Fy = 0.048 kN, Fz = 62.518 kN</p>
        <div class="legend">
          <h3>Pressure [kN/m²]</h3>
          <div class="scale">
            <div class="swatches"><i class="c1"></i><i class="c2"></i><i class="c3"></i><i class="c4"></i><i class="c5"></i><i class="c6"></i><i class="c7"></i><i class="c8"></i><i class="c9"></i><i class="c10"></i><i class="c11"></i></div>
            <div class="vals"><span>1.049</span><span>0.797</span><span>0.546</span><span>0.294</span><span>0.042</span><span>-0.209</span><span>-0.461</span><span>-0.713</span><span>-0.965</span><span>-1.216</span><span>-1.468</span><span>-1.720</span></div>
          </div>
          <dl><dt>Max:</dt><dd>1.049</dd><dt>Min:</dt><dd>-1.720</dd></dl>
        </div>
      </div>
      <div class="tabs">
        <button><svg class="ic"><use href="#model"/></svg>Models</button>
        <button><svg class="ic"><use href="#zone"/></svg>Zones</button>
        <button><svg class="ic"><use href="#mesh"/></svg>Mesh Refinements</button>
        <button class="cur"><svg class="ic"><use href="#sim"/></svg>Simulation</button>
      </div>
    </section>

    <aside class="edit">
      <div class="panehead"><h2>Edit Bar - Simulation</h2><button aria-label="Pin"><svg><use href="#pin"/></svg></button><button aria-label="Close"><svg><use href="#x"/></svg></button></div>
      <div class="groups">
        <section class="group"><h3>Editor</h3>
          <button><svg class="ic"><use href="#model"/></svg>Edit Model</button>
          <button><svg class="ic"><use href="#zone"/></svg>Edit Zones</button>
          <button><svg class="ic"><use href="#grid"/></svg>Edit Mesh Refinements</button>
          <button class="active"><svg class="ic"><use href="#sim"/></svg>Edit Simulation</button>
        </section>
        <section class="group"><h3>Simulation</h3>
          <button><svg class="ic"><use href="#simpar"/></svg>Simulation Parameters…</button>
          <button><svg class="ic"><use href="#delres"/></svg>Delete Results</button>
        </section>
        <section class="group"><h3>Results - Surface Quantities</h3>
          <button class="active"><span class="q hot">p</span>Surface Pressure</button>
          <button><span class="q hot">c<small>p</small></span>Surface Cp Coefficient</button>
        </section>
        <section class="group"><h3>Results - Flow Field Quantities</h3>
          <button><span class="q">p</span>Pressure Field</button>
          <button><span class="q">v</span>Velocity Field</button>
          <button><span class="q">k</span>Turbulence - k Field</button>
          <button><span class="q">ε</span>Turbulence - epsilon Field</button>
        </section>
        <section class="group"><h3>Results - Other Options</h3>
          <button><svg class="ic sea"><use href="#vectors"/></svg>Velocity Vectors</button>
          <button><svg class="ic sea" viewBox="0 0 16 16"><use href="#streams"/><path d="M6 6h4v4h-4z" fill="#f2b20c"/></svg>Streamlines</button>
          <button><svg class="ic"><use href="#resid"/></svg>Residuals</button>
          <button><svg class="ic"><use href="#graph"/></svg>Graph Along Line</button>
          <button><svg class="ic"><use href="#cutinfo"/></svg>Section Information</button>
        </section>
        <section class="group"><h3>Display Options</h3>
          <label><input type="checkbox">Results on Computational Mesh</label>
          <label><input type="checkbox" checked>Show Drag Forces</label>
          <label><input type="checkbox">Show Point Probes</label>
          <label><input type="checkbox">Section Info-Window</label>
        </section>
      </div>
    </aside>
  </main>

  <footer class="status"><span>For Help, press F1</span><span class="cell wide">Section View</span><span class="cell"></span><span class="cell"></span><span class="cell"></span><span class="cell"></span><span class="cell"></span></footer>

  <div class="dialog" role="dialog" aria-label="Edit Zone">
    <div class="dtitle"><h2>Edit Zone</h2><button aria-label="Close"><svg viewBox="0 0 10 10"><path d="M0 0l10 10M10 0L0 10" stroke="#111"/></svg></button></div>
    <div class="dtabs"><button>General</button><button class="cur">Info</button></div>
    <div class="dpage">
      <fieldset class="box">
        <h3>Object Information</h3>
        <div class="memo">
          <textarea readonly aria-label="Object Information">========================
Zone No. 1 - Front
========================
Original Model:
   Area = 75 m²
   YZ-Projected Area = 74.975 m²
   Cx = 0.62
   Number of triangles = 4608
   Drag Force:
   F = 62.315 kN
   Fx = 62.315 kN, Fy = 0 kN, Fz = 0 kN
   Pressure p (pᴺ = p⁺ - p⁻):
   Average Value pᴺ = 0.806, p⁺ = 0.806, p⁻ = 0 kN/m²
   Min pᴺ = -1.72, Min p⁺ = -1.72, Min p⁻ = 0 kN/m²
   Max pᴺ = 1.049, Max p⁺ = 1.049, Max p⁻ = 0 kN/m²
   Pressure Coefficient Cp (Cpᴺ = Cp⁺ - Cp⁻):
   Average Value Cpᴺ = 0.796, Cp⁺ = 0.796, Cp⁻ = 0
   Min Cpᴺ = -1.699, Min Cp⁺ = -1.699, Min Cp⁻ = 0
   Max Cpᴺ = 1.036, Max Cp⁺ = 1.036, Max Cp⁻ = 0</textarea>
          <div class="bar"><i class="up"></i><i class="down"></i></div>
        </div>
      </fieldset>
      <button class="btn update">Update</button>
    </div>
    <div class="dfoot"><button class="btn">OK</button><button class="btn">Cancel</button><button class="btn" disabled>Apply</button><button class="btn">Help</button></div>
  </div>
</div>
<script src="mesh.js"></script>
</body>
</html>
```
FILE: styles.css
```css
* { box-sizing: border-box; }
html, body { height: 100%; }
body { margin: 0; background: #2c1440; font: 11px/16px Roboto, "Liberation Sans", sans-serif; color: #000; }
button { font: inherit; color: inherit; background: none; border: 0; padding: 0; margin: 0; }
h1, h2, h3, p, ul, dl, dd, fieldset { margin: 0; padding: 0; font: inherit; border: 0; }
ul { list-style: none; }
.sprite { position: absolute; width: 0; height: 0; }
.ic { width: 16px; height: 16px; flex: none; display: block; }
.window { position: relative; min-height: 100vh; height: 100vh; display: flex; flex-direction: column; background: #f0f0f0; border: 1px solid #3a2440; border-radius: 8px; overflow: hidden; }

.titlebar { height: 30px; flex: none; background: #fff; display: flex; align-items: center; padding-left: 8px; gap: 5px; color: #8a8a8a; }
.titlebar h1 { flex: 1; font: 12px/16px Roboto, sans-serif; }
.winbtns { display: flex; }
.winbtns button { width: 46px; display: grid; place-items: center; }
.winbtns svg { width: 10px; height: 10px; fill: none; stroke: #777; }

.menubar { height: 26px; flex: none; display: flex; align-items: center; padding-left: 6px; background: linear-gradient(90deg, #e6ebf8, #f3f5fd); font: 12px/16px Roboto, sans-serif; }
.menubar > button { padding: 0 9px; }
.menubar .ic { margin-left: 1px; }
.grip { width: 3px; height: 16px; flex: none; background: repeating-linear-gradient(#a9aec2 0 2px, transparent 2px 4px); }
.mdi { margin-left: auto; display: flex; padding-right: 6px; gap: 8px; }
.mdi svg { width: 8px; height: 8px; display: block; fill: none; stroke: #000; }

.toolrow { height: 27px; flex: none; background: #f1f3fc; padding-left: 3px; }
.toolbar { height: 24px; width: max-content; display: flex; align-items: center; padding-left: 3px; background: linear-gradient(#fafbfe, #e6e9f3 50%, #c3c8dc); border-radius: 3px; }
.toolbar > .grip { margin-right: 1px; }
.toolbar button { width: 22px; height: 22px; display: flex; align-items: center; padding: 3px; color: #2c62c0; flex: none; }
.toolbar .drop { width: 29px; }
.toolbar .drop::after { content: ""; border: 3px solid transparent; border-top-color: #222; border-bottom: 0; flex: none; margin-left: 1px; }
.toolbar i { width: 6px; height: 16px; flex: none; background: linear-gradient(90deg, transparent 2px, #a4a9bd 2px 3px, #fff 3px 4px, transparent 4px); }
.toolbar .on { background: linear-gradient(#a9d8ec, #cdeaf6); border: 1px solid #3c8cb8; padding: 2px; }
.toolbar .soft { border-color: #9ab0bc; background: #a5d2e4; }
.toolbar .dim { color: #a8aebe; }
.toolbar .dim::after { border-top-color: #a8aebe; }
.toolbar .flip svg { transform: scaleX(-1); }
.toolbar .more { width: 12px; height: 24px; background: #c5cadc; align-items: flex-end; padding: 0 3px 3px; }
.toolbar .more::after { content: ""; border: 3px solid transparent; border-top-color: #000; border-bottom: 0; box-shadow: 0 -5px 0 -3px #000; }

.main { flex: 1; min-height: 0; display: flex; }
.nav { width: 236px; flex: none; display: flex; flex-direction: column; }
.center { flex: 1; min-width: 0; display: flex; flex-direction: column; margin: 0 4px 0 5px; }
.edit { width: 259px; flex: none; display: flex; flex-direction: column; background: #fff; }
.panehead { height: 17px; flex: none; margin: 1px 1px 0 0; display: flex; align-items: center; background: #bdccdb; padding: 0 1px 0 3px; gap: 1px; }
.panehead h2 { flex: 1; }
.panehead button { width: 13px; height: 13px; background: #f0f0f0; border: 1px solid; border-color: #fff #777 #777 #fff; display: grid; place-items: center; }
.panehead svg { width: 8px; height: 8px; display: block; }

.treebox { flex: 1; min-height: 0; overflow: hidden; background: #fff; padding-left: 4px; padding-top: 1px; border-bottom: 1px solid #777; }
.row { display: flex; height: 16px; gap: 5px; white-space: nowrap; line-height: 18px; }
.row strong { font: bold 11px/18px "DejaVu Sans Condensed", "DejaVu Sans", sans-serif; }
.row b { width: 18px; margin-right: -5px; flex: none; position: relative; background: repeating-linear-gradient(90deg, #a8a8a8 0 1px, transparent 1px 2px) 5px 8px / 12px 1px no-repeat; }
.row .ex { background-position: 12px 8px; background-size: 5px 1px; font-size: 10px; line-height: 7px; color: transparent; }
.row .ex::before { content: ""; position: absolute; left: 1px; top: 3px; width: 9px; height: 9px; border: 1px solid #919191; border-radius: 1px; background: linear-gradient(#2c4c98, #2c4c98) 1px 3px / 5px 1px no-repeat, linear-gradient(#fff, #ddd); }
li > .row:only-child .ex::before { background: linear-gradient(#2c4c98, #2c4c98) 1px 3px / 5px 1px no-repeat, linear-gradient(#2c4c98, #2c4c98) 3px 1px / 1px 5px no-repeat, linear-gradient(#fff, #ddd); }
.tree li { position: relative; }
.tree ul { padding-left: 19px; }
.tree li::before { content: ""; position: absolute; left: 5px; top: 0; bottom: 0; width: 1px; background: repeating-linear-gradient(#a8a8a8 0 1px, transparent 1px 2px); }
.tree li:last-child::before { bottom: auto; height: 8px; }

.tabs { height: 22px; flex: none; display: flex; align-items: flex-start; font: 12px/16px Roboto, sans-serif; padding-left: 1px; }
.tabs button { height: 19px; display: flex; align-items: center; gap: 2px; padding: 0 1px 0 3px; border-right: 2px solid #777; border-bottom: 2px solid #777; }
.tabs .cur { height: 21px; margin-top: -1px; padding: 0 3px 0 4px; background: #f0f0f0; position: relative; }

.view { flex: 1; min-height: 0; position: relative; overflow: hidden; margin-top: 1px; border: 2px solid; border-color: #777 #e4e4e4 #777 #777; background: #fff; }
.scene { display: block; width: 100%; height: 100%; }
.center .tabs { padding-left: 2px; }
.note { position: absolute; left: 5px; font: 12px/15px "Liberation Sans", sans-serif; color: #000080; white-space: nowrap; }
.note.head { top: 5px; }
.note.foot { bottom: 6px; }
.force { position: absolute; left: 156px; top: 422px; background: #fff; color: #f0f; font: bold 11px/16px "Liberation Sans", sans-serif; padding: 0 1px; height: 16px; }
.ax { position: absolute; font: 11px/12px "Liberation Sans", sans-serif; }
.z { left: 63px; top: 684px; color: #00f; }
.y { left: 34px; top: 720px; color: #0d0; }
.x { left: 101px; top: 723px; color: #f00; }
.legend { position: absolute; right: 12px; top: 4px; min-width: 85px; color: #000080; text-align: right; }
.legend h3 { line-height: 14px; }
.scale { display: flex; justify-content: space-between; padding-left: 6px; }
.swatches { display: flex; flex-direction: column; gap: 4px; padding-top: 5px; }
.swatches i { width: 41px; height: 15px; border: 1px solid #000; }
.c1 { background: #bd0000; } .c2 { background: #f00; } .c3 { background: #ff8600; } .c4 { background: #cfcf00; } .c5 { background: #ff0; } .c6 { background: #0f0; }
.c7 { background: #00e68a; } .c8 { background: #00f4f4; } .c9 { background: #3fb4ff; } .c10 { background: #7f7fff; } .c11 { background: #0000e6; }
.vals { display: flex; flex-direction: column; }
.vals span { height: 19px; line-height: 13px; }
.legend dl { display: grid; grid-template-columns: 1fr 40px; line-height: 13px; margin-top: -1px; }

.groups { padding: 3px 2px 0 2px; display: flex; flex-direction: column; gap: 2px; }
.group { border: 1px solid #c3c6d8; background: #fafafc; display: flex; flex-direction: column; }
.group h3 { height: 18px; line-height: 18px; padding: 1px 3px 0; color: #4c5262; background: linear-gradient(#f6f7fb, #c8ccdd); display: flex; justify-content: space-between; align-items: center; }
.group h3::after { content: ""; border: 4px solid transparent; border-top-color: #808080; border-bottom: 0; }
.group button, .group label { height: 19px; display: flex; align-items: center; gap: 6px; padding: 2px 3px 0 2px; text-align: left; }
.group .ic, .group .q, .group input { margin-top: -2px; }
.group .active { font: bold 11px/16px "DejaVu Sans Condensed", sans-serif; }
.group .active::after { content: ""; margin: -2px 0 0 auto; border: 4px solid transparent; border-right-color: #101060; border-left: 0; }
.sea { color: #1a84cc; }
.q { width: 16px; height: 15px; font: 13px/10px "Open Sans", sans-serif; text-align: center; color: #222; border-bottom: 3px solid #8cc8f0; flex: none; }
.q.hot { border-color: #f08040; }
.q small { font-size: 9px; }
.group input { appearance: none; width: 14px; height: 14px; margin: -2px 1px 0; border: 1px solid #3c68b8; background: linear-gradient(135deg, #dcdcdc, #fff); display: grid; place-items: center; }
.group input:checked::after { content: ""; width: 8px; height: 4px; border: solid #188018; border-width: 0 0 2px 2px; transform: translateY(-1px) rotate(-48deg); }

.status { height: 22px; flex: none; display: flex; align-items: center; font: 12px/16px Roboto, sans-serif; padding: 1px 7px 0 3px; }
.status > span:first-child { flex: 1; }
.cell { border-left: 1px solid #d4d4d4; height: 18px; width: 72px; padding: 1px 5px; }
.cell.wide { width: 78px; white-space: nowrap; }

.dialog { position: absolute; left: 661px; top: 404px; width: 407px; background: #f0f0f0; border-radius: 8px; box-shadow: 0 0 0 1px #8a8c8c, 0 10px 34px 4px rgba(0,0,0,.42); overflow: hidden; display: flex; flex-direction: column; padding-bottom: 8px; }
.dtitle { height: 30px; background: #fff; display: flex; align-items: center; padding: 0 10px 0 8px; font: 12px/16px "Open Sans", sans-serif; }
.dtitle h2 { flex: 1; }
.dtitle svg { width: 10px; height: 10px; display: block; }
.dtabs { display: flex; align-items: flex-end; padding: 7px 0 0 8px; }
.dtabs button { height: 19px; padding: 0 5px; border: 1px solid #e2e2e2; border-bottom: 0; background: #f4f4f4; }
.dtabs .cur { height: 21px; width: 46px; padding: 0 7px; text-align: left; background: #f9f9f9; position: relative; margin-bottom: -1px; }
.dpage { margin: 0 7px 0 6px; background: #f9f9f9; border: 1px solid #e2e2e2; padding: 9px 11px 7px 8px; }
.box { border: 1px solid #b8bfd4; height: 340px; display: flex; flex-direction: column; }
.box h3 { height: 16px; flex: none; padding: 0 4px; color: #4c5262; background: linear-gradient(#f4f5fa, #c9cee0); border-bottom: 1px solid #b8bfd4; }
.memo { flex: 1; min-height: 0; margin: 6px 8px 5px 6px; display: flex; border: 1px solid #e6e6e6; border-bottom-color: #868686; }
.memo textarea { flex: 1; border: 0; outline: 0; resize: none; overflow: hidden; background: #f9f9f9; padding: 3px 4px; margin: 0; white-space: pre; font: 11px/13px "DejaVu Sans Condensed", "DejaVu Sans", sans-serif; color: #000; }
.bar { width: 17px; background: #f0f0f0; display: flex; flex-direction: column; justify-content: space-between; align-items: center; padding: 6px 0; }
.bar i { border: 4px solid transparent; }
.bar .up { border-bottom: 6px solid #a0a0a0; border-top: 0; }
.bar .down { border-top: 6px solid #a0a0a0; border-bottom: 0; }
.btn { width: 73px; height: 21px; background: #fdfdfd; border: 1px solid #d0d0d0; border-radius: 4px; }
.btn:disabled { color: #8c8c8c; background: #f5f5f5; border-color: #e4e4e4; }
.update { display: block; width: 99px; height: 22px; margin-top: 9px; border-color: #0067c0; }
.dfoot { display: flex; justify-content: flex-end; gap: 8px; padding: 9px 7px 0; }
```
FILE: mesh.js
```js
// Faint tunnel mesh: two line families, denser around the middle of the view.
const host = document.getElementById('mesh-lines');
function family(slope) {
  const parts = [];
  const mid = 640;
  let d = 0, step = 5;
  while (d < 1100) {
    for (const y of d ? [mid - d, mid + d] : [mid]) {
      parts.push(`M244 ${Math.round(y - slope * 430)}L1110 ${Math.round(y + slope * 436)}`);
    }
    d += step;
    step *= 1.1;
  }
  const p = document.createElementNS('http://www.w3.org/2000/svg', 'path');
  p.setAttribute('d', parts.join(''));
  host.appendChild(p);
}
family(-0.2);
family(0.3);
```
